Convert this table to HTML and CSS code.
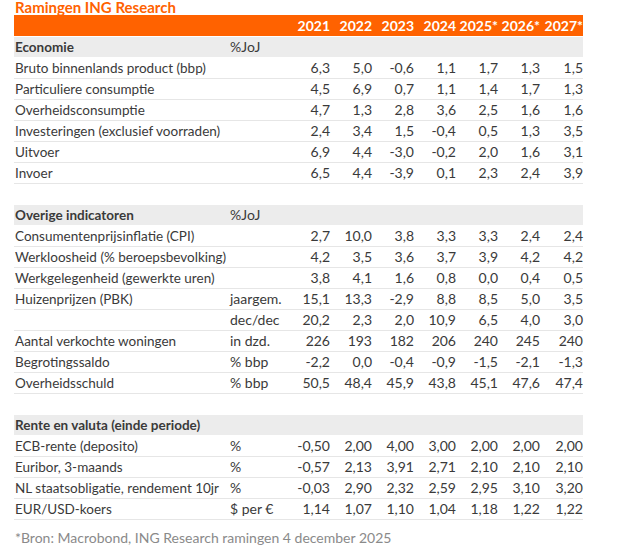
FILE: index.html
```html
<!DOCTYPE html>
<html lang="nl">
<head>
<meta charset="utf-8">
<title>Ramingen ING Research</title>
<link rel="stylesheet" href="styles.css">
</head>
<body>
<div class="sheet">
  <h1 class="title">Ramingen ING Research</h1>
  <table class="forecast">
    <colgroup>
      <col class="c-label"><col class="c-unit">
      <col class="c-num"><col class="c-num"><col class="c-num"><col class="c-num"><col class="c-num"><col class="c-num"><col class="c-last">
    </colgroup>
    <thead>
      <tr class="head">
        <th></th><th></th>
        <th>2021</th><th>2022</th><th>2023</th><th>2024</th><th>2025*</th><th>2026*</th><th>2027*</th>
      </tr>
    </thead>
    <tbody>
      <tr class="band"><td class="label">Economie</td><td class="unit">%JoJ</td><td colspan="7"></td></tr>
      <tr><td class="label">Bruto binnenlands product (bbp)</td><td class="unit"></td><td>6,3</td><td>5,0</td><td>-0,6</td><td>1,1</td><td>1,7</td><td>1,3</td><td>1,5</td></tr>
      <tr><td class="label">Particuliere consumptie</td><td class="unit"></td><td>4,5</td><td>6,9</td><td>0,7</td><td>1,1</td><td>1,4</td><td>1,7</td><td>1,3</td></tr>
      <tr><td class="label">Overheidsconsumptie</td><td class="unit"></td><td>4,7</td><td>1,3</td><td>2,8</td><td>3,6</td><td>2,5</td><td>1,6</td><td>1,6</td></tr>
      <tr><td class="label">Investeringen (exclusief voorraden)</td><td class="unit"></td><td>2,4</td><td>3,4</td><td>1,5</td><td>-0,4</td><td>0,5</td><td>1,3</td><td>3,5</td></tr>
      <tr><td class="label">Uitvoer</td><td class="unit"></td><td>6,9</td><td>4,4</td><td>-3,0</td><td>-0,2</td><td>2,0</td><td>1,6</td><td>3,1</td></tr>
      <tr><td class="label">Invoer</td><td class="unit"></td><td>6,5</td><td>4,4</td><td>-3,9</td><td>0,1</td><td>2,3</td><td>2,4</td><td>3,9</td></tr>
      <tr class="gap"><td colspan="9"></td></tr>
      <tr class="band"><td class="label">Overige indicatoren</td><td class="unit">%JoJ</td><td colspan="7"></td></tr>
      <tr><td class="label">Consumentenprijsinflatie (CPI)</td><td class="unit"></td><td>2,7</td><td>10,0</td><td>3,8</td><td>3,3</td><td>3,3</td><td>2,4</td><td>2,4</td></tr>
      <tr><td class="label">Werkloosheid (% beroepsbevolking)</td><td class="unit"></td><td>4,2</td><td>3,5</td><td>3,6</td><td>3,7</td><td>3,9</td><td>4,2</td><td>4,2</td></tr>
      <tr><td class="label">Werkgelegenheid (gewerkte uren)</td><td class="unit"></td><td>3,8</td><td>4,1</td><td>1,6</td><td>0,8</td><td>0,0</td><td>0,4</td><td>0,5</td></tr>
      <tr><td class="label">Huizenprijzen (PBK)</td><td class="unit">jaargem.</td><td>15,1</td><td>13,3</td><td>-2,9</td><td>8,8</td><td>8,5</td><td>5,0</td><td>3,5</td></tr>
      <tr><td class="label"></td><td class="unit">dec/dec</td><td>20,2</td><td>2,3</td><td>2,0</td><td>10,9</td><td>6,5</td><td>4,0</td><td>3,0</td></tr>
      <tr><td class="label">Aantal verkochte woningen</td><td class="unit">in dzd.</td><td>226</td><td>193</td><td>182</td><td>206</td><td>240</td><td>245</td><td>240</td></tr>
      <tr><td class="label">Begrotingssaldo</td><td class="unit">% bbp</td><td>-2,2</td><td>0,0</td><td>-0,4</td><td>-0,9</td><td>-1,5</td><td>-2,1</td><td>-1,3</td></tr>
      <tr><td class="label">Overheidsschuld</td><td class="unit">% bbp</td><td>50,5</td><td>48,4</td><td>45,9</td><td>43,8</td><td>45,1</td><td>47,6</td><td>47,4</td></tr>
      <tr class="gap"><td colspan="9"></td></tr>
      <tr class="band"><td class="label" colspan="2">Rente en valuta (einde periode)</td><td colspan="7"></td></tr>
      <tr><td class="label">ECB-rente (deposito)</td><td class="unit">%</td><td>-0,50</td><td>2,00</td><td>4,00</td><td>3,00</td><td>2,00</td><td>2,00</td><td>2,00</td></tr>
      <tr><td class="label">Euribor, 3-maands</td><td class="unit">%</td><td>-0,57</td><td>2,13</td><td>3,91</td><td>2,71</td><td>2,10</td><td>2,10</td><td>2,10</td></tr>
      <tr><td class="label">NL staatsobligatie, rendement 10jr</td><td class="unit">%</td><td>-0,03</td><td>2,90</td><td>2,32</td><td>2,59</td><td>2,95</td><td>3,10</td><td>3,20</td></tr>
      <tr><td class="label">EUR/USD-koers</td><td class="unit">$ per €</td><td>1,14</td><td>1,07</td><td>1,10</td><td>1,04</td><td>1,18</td><td>1,22</td><td>1,22</td></tr>
    </tbody>
  </table>
  <p class="note">*Bron: Macrobond, ING Research ramingen 4 december 2025</p>
</div>
</body>
</html>
```

FILE: styles.css
```css
html, body {
  margin: 0;
  padding: 0;
  background: #ffffff;
}

body {
  font-family: "Lato", "Open Sans", sans-serif;
  color: #3a3a3a;
}

.sheet {
  padding-left: 14px;
}

.title {
  margin: 0;
  padding-left: 1px;
  height: 15px;
  line-height: 15px;
  font-size: 15px;
  font-weight: 700;
  color: #ff6200;
}

.forecast {
  border-collapse: collapse;
  table-layout: fixed;
  width: 569px;
  font-size: 14px;
}

.c-label { width: 216px; }
.c-unit { width: 58px; }
.c-num { width: 42px; }
.c-last { width: 43px; }

.forecast th,
.forecast td {
  padding: 0;
  height: 20px;
  line-height: 20px;
  text-align: right;
  white-space: nowrap;
  border-bottom: 1px solid #e6e6e6;
}

.forecast .head th {
  background: #ff6200;
  color: #ffffff;
  font-weight: 700;
  font-size: 14px;
  height: 21px;
  line-height: 21px;
  border-bottom: 1px solid #ffffff;
}

.forecast td.label {
  text-align: left;
  padding-left: 1px;
  font-size: 13.5px;
}

.forecast td.unit {
  text-align: left;
}

.forecast .band td {
  background: #ececec;
  font-weight: 700;
  border-bottom: 1px solid #ffffff;
}

.forecast .band td.unit {
  font-weight: 400;
}

.forecast .gap td {
  border-bottom: none;
  height: 21px;
}

.note {
  margin: 9px 0 0 1px;
  font-size: 14px;
  color: #8a8a8a;
}
```
